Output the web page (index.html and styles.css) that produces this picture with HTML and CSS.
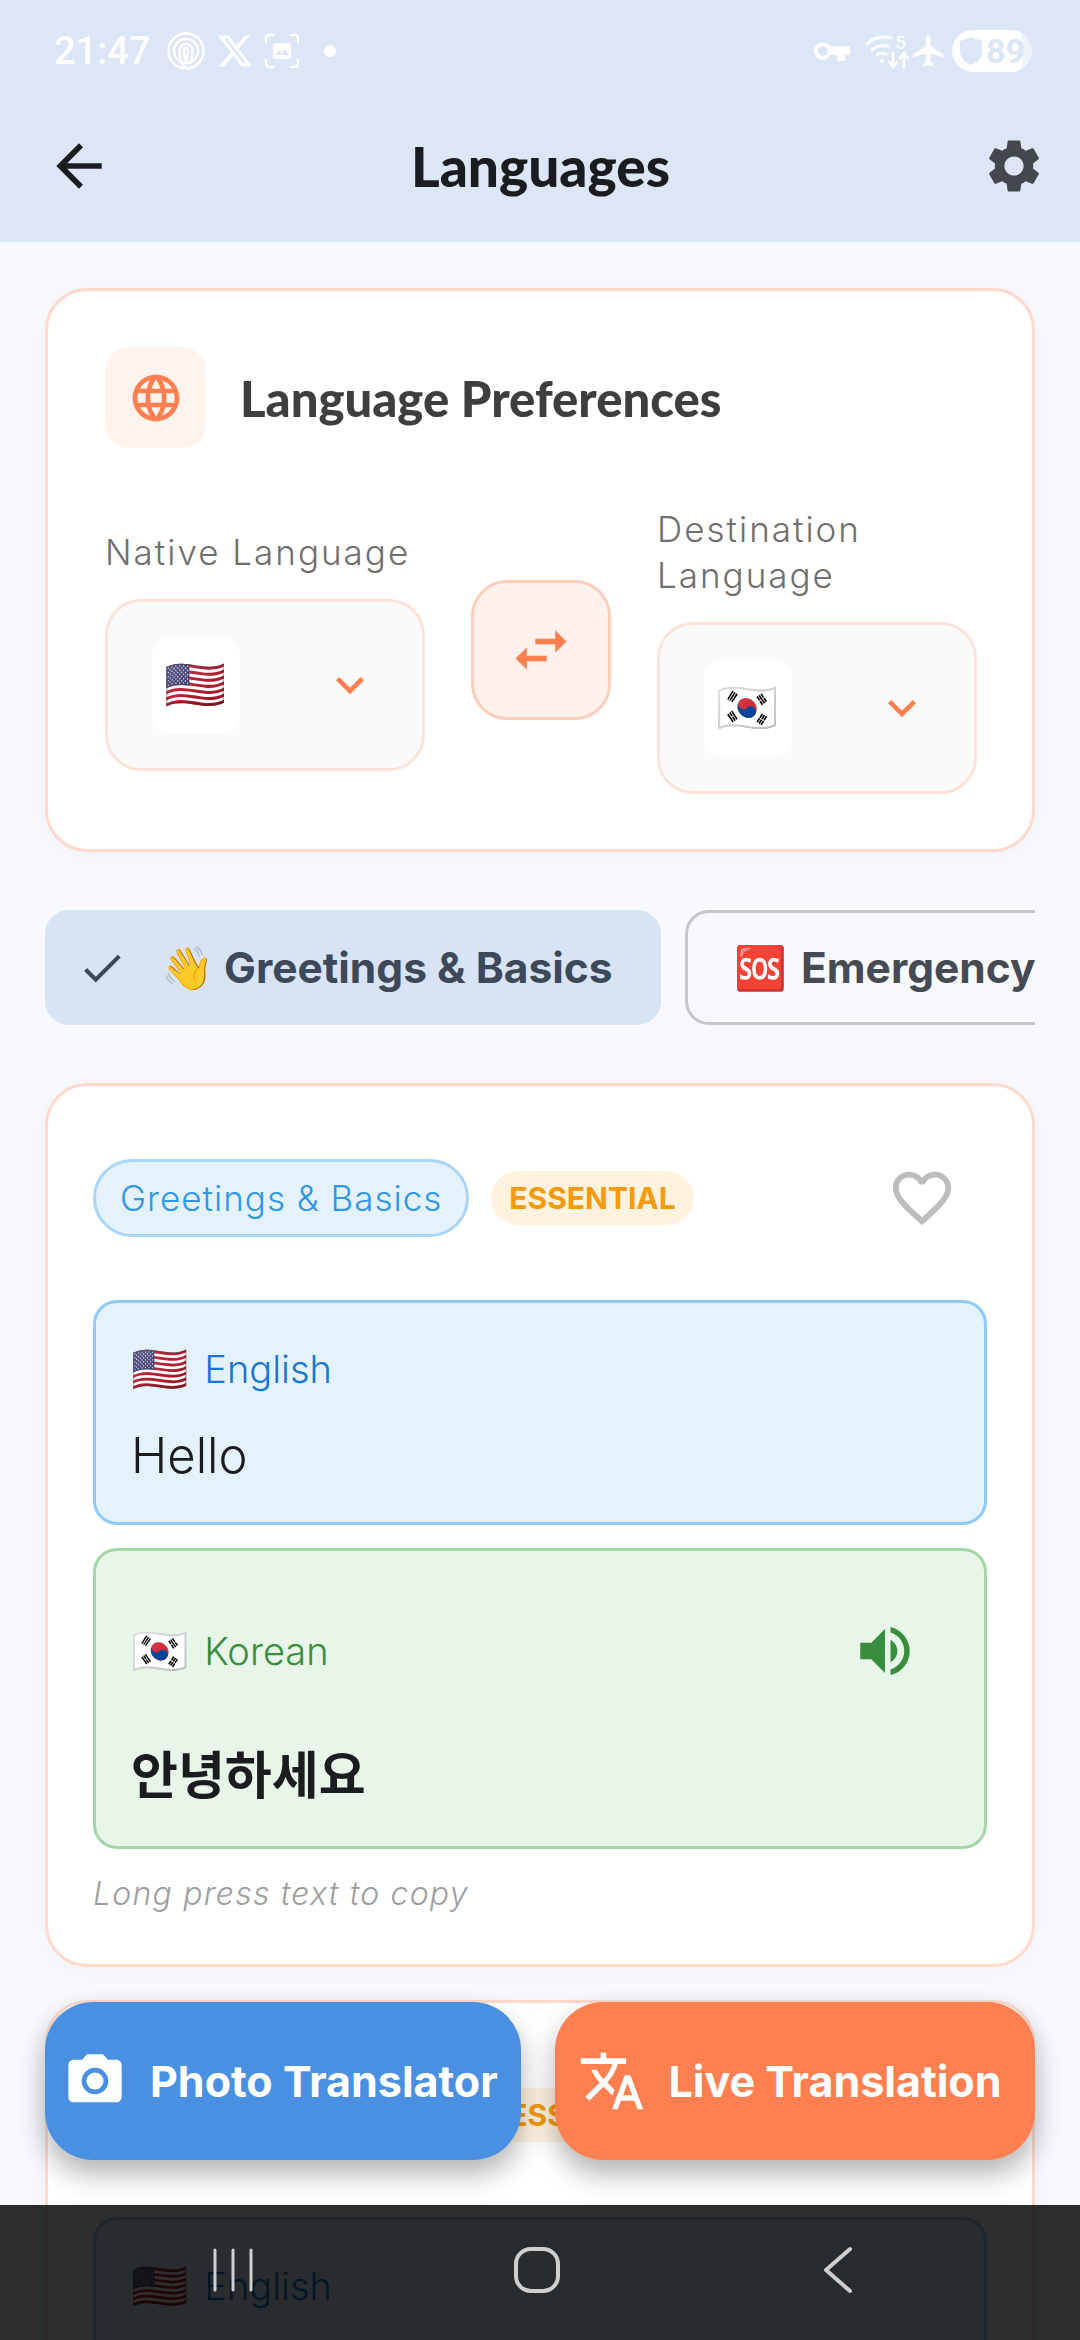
FILE: index.html
```html
<!DOCTYPE html>
<html lang="en">

<head>
    <meta charset="UTF-8">
    <meta name="viewport" content="width=device-width, initial-scale=1">
    <title>Languages</title>
    <link rel="stylesheet" href="styles.css">
</head>

<body>
    <div class="app">
        <div class="topbar">
            <div class="status">
                <div class="status-left">
                    <span class="time">21:47</span>
                    <svg class="st-icon" width="40" height="40" viewBox="0 0 40 40" fill="none" stroke="#fff" stroke-width="2.4"><circle cx="20" cy="20" r="17.5"/><circle cx="20" cy="20" r="12"/><path d="M20 37c-5-4-6.500-10-6.500-17 0-4 2.500-7 6.500-7s6.500 3 6.500 7c0 5-1 9-3 12"/><path d="M20 30c-1.500-3-2-6-2-10 0-2 1-3 2-3s2 1 2 3c0 4-.5 7-2 10z"/></svg>
                    <svg class="st-icon" width="38" height="38" viewBox="0 0 24 24" fill="#fff"><path d="M18.240 2.250h3.310l-7.230 8.260 8.500 11.240H16.170l-5.210-6.820L4.990 21.750H1.680l7.730-8.830L1.250 2.250H8.080l4.710 6.230zm-1.160 17.520h1.830L7.080 4.130H5.120z"/></svg>
                    <svg class="st-icon" width="36" height="36" viewBox="0 0 36 36" fill="none" stroke="#fff" stroke-width="2.600" stroke-linecap="round"><path d="M2 9V5a3 3 0 0 1 3-3h4M27 2h4a3 3 0 0 1 3 3v4M34 27v4a3 3 0 0 1-3 3h-4M9 34H5a3 3 0 0 1-3-3v-4"/><rect x="9" y="10" width="18" height="16" rx="3" fill="#fff" stroke="none"/><path d="M11 22l4-5 3 3 3-4 4 6z" fill="#dce6f7" stroke="none"/></svg>
                    <span class="dot"></span>
                </div>
                <div class="status-right">
                    <svg class="st-key" width="37" height="22" viewBox="0 0 38 22" fill="none"><circle cx="10" cy="11" r="7" stroke="#fff" stroke-width="4"/><path d="M16 6h22v9h-5v6h-8v-6H16z" fill="#fff"/></svg>
                    <svg class="st-wifi" width="44" height="36" viewBox="0 0 44 36" fill="none" stroke="#fff" stroke-width="2.800" stroke-linecap="round"><path d="M1 11c7-7 16-8 24-6M6 17c5-5 11-5 16-4M11 22c3-2 6-2 9-1"/><circle cx="16" cy="28" r="2" fill="#fff" stroke="none"/><path d="M27 20v13m-4-4l4 5 4-5M38 34V21m-4 4l4-5 4 5"/><text x="29" y="16" class="wifi-num">5</text></svg>
                    <svg width="38" height="38" viewBox="0 0 24 24" fill="#fff"><path d="M21 16v-2l-8-5V3.500c0-.83-.67-1.500-1.500-1.500S10 2.670 10 3.500V9l-8 5v2l8-2.500V19l-2 1.500V22l3.500-1 3.500 1v-1.500L13 19v-5.500z"/></svg>
                    <span class="battery"><svg width="24" height="30" viewBox="0 0 24 30" fill="#dce6f7"><path d="M12 1l11 4v10c0 7-5 12-11 14C6 27 1 22 1 15V5z"/></svg><span class="battery-num">89</span></span>
                </div>
            </div>
            <header class="appbar">
                <svg width="68" height="68" viewBox="0 0 24 24" fill="#1a1c20"><path d="M20 11H7.830l5.590-5.590L12 4l-8 8 8 8 1.410-1.410L7.830 13H20v-2z"/></svg>
                <h1>Languages</h1>
                <svg width="64" height="64" viewBox="0 0 24 24" fill="#43474e"><path d="M19.140 12.940c.04-.3.06-.61.06-.94 0-.32-.02-.64-.07-.94l2.030-1.580c.18-.14.23-.41.12-.61l-1.920-3.320c-.12-.22-.37-.29-.59-.22l-2.390.96c-.5-.38-1.030-.7-1.620-.94l-.36-2.540c-.04-.24-.24-.41-.48-.41h-3.840c-.24 0-.43.17-.47.41l-.36 2.540c-.59.24-1.130.57-1.620.94l-2.390-.96c-.22-.08-.47 0-.59.22L2.740 8.870c-.12.21-.08.47.12.61l2.030 1.580c-.05.3-.09.63-.09.94s.02.64.07.94l-2.030 1.580c-.18.14-.23.41-.12.61l1.920 3.320c.12.22.37.29.59.22l2.390-.96c.5.38 1.030.7 1.620.94l.36 2.540c.05.24.24.41.48.41h3.840c.24 0 .44-.17.47-.41l.36-2.540c.59-.24 1.130-.56 1.620-.94l2.390.96c.22.08.47 0 .59-.22l1.920-3.320c.12-.22.07-.47-.12-.61l-2.010-1.580zM12 15.600c-1.980 0-3.600-1.620-3.600-3.600s1.620-3.600 3.600-3.600 3.600 1.620 3.600 3.600-1.620 3.600-3.600 3.600z"/></svg>
            </header>
        </div>

        <main class="content">
            <section class="card prefs">
                <div class="prefs-head">
                    <div class="prefs-icon">
                        <svg width="56" height="56" viewBox="0 0 24 24" fill="#ff7f50"><path d="M11.990 2C6.470 2 2 6.480 2 12s4.470 10 9.990 10C17.520 22 22 17.520 22 12S17.520 2 11.990 2zm6.930 6h-2.950c-.32-1.250-.78-2.450-1.380-3.560 1.840.63 3.370 1.910 4.330 3.560zM12 4.040c.83 1.200 1.480 2.530 1.910 3.960h-3.820c.43-1.430 1.080-2.760 1.910-3.960zM4.260 14C4.100 13.360 4 12.690 4 12s.1-1.360.26-2h3.380c-.08.66-.14 1.320-.14 2 0 .68.06 1.340.14 2H4.260zm.82 2h2.950c.32 1.250.78 2.450 1.380 3.560-1.840-.63-3.370-1.900-4.330-3.560zm2.950-8H5.080c.96-1.660 2.490-2.930 4.330-3.560C8.810 5.550 8.350 6.750 8.030 8zM12 19.960c-.83-1.200-1.480-2.530-1.910-3.960h3.820c-.43 1.430-1.080 2.760-1.910 3.960zM14.340 14H9.660c-.09-.66-.16-1.320-.16-2 0-.68.07-1.350.16-2h4.680c.09.65.16 1.320.16 2 0 .68-.07 1.340-.16 2zm.25 5.560c.6-1.110 1.060-2.310 1.380-3.560h2.950c-.96 1.650-2.490 2.930-4.330 3.560zM16.360 14c.08-.66.14-1.320.14-2 0-.68-.06-1.340-.14-2h3.380c.16.64.26 1.310.26 2s-.1 1.360-.26 2h-3.380z"/></svg>
                    </div>
                    <h2>Language Preferences</h2>
                </div>
                <div class="lang-row">
                    <div class="lang-col">
                        <label class="lang-label">Native Language</label>
                        <div class="select">
                            <span class="flag-tile emoji">🇺🇸</span>
                            <svg width="56" height="56" viewBox="0 0 24 24" fill="#ff7f50"><path d="M7.410 8.590L12 13.170l4.590-4.580L18 10l-6 6-6-6 1.410-1.410z"/></svg>
                        </div>
                    </div>
                    <div class="swap">
                        <svg width="68" height="68" viewBox="0 0 24 24" fill="#ff7f50"><path d="M6.990 11L3 15l3.990 4v-3H14v-2H6.990v-3zM21 9l-3.990-4v3H10v2h7.010v3L21 9z"/></svg>
                    </div>
                    <div class="lang-col">
                        <label class="lang-label">Destination Language</label>
                        <div class="select">
                            <span class="flag-tile emoji">🇰🇷</span>
                            <svg width="56" height="56" viewBox="0 0 24 24" fill="#ff7f50"><path d="M7.410 8.590L12 13.170l4.590-4.580L18 10l-6 6-6-6 1.410-1.410z"/></svg>
                        </div>
                    </div>
                </div>
            </section>

            <div class="chips">
                <div class="chip chip-on">
                    <svg width="50" height="50" viewBox="0 0 24 24" fill="#3d4858"><path d="M9 16.170L4.830 12l-1.420 1.410L9 19 21 7l-1.410-1.410z"/></svg>
                    <span class="chip-text"><span class="emoji">👋</span> Greetings &amp; Basics</span>
                </div>
                <div class="chip chip-off">
                    <span class="chip-text"><span class="emoji">🆘</span> Emergency</span>
                </div>
            </div>

            <section class="card phrase">
                <div class="phrase-head">
                    <span class="tag">Greetings &amp; Basics</span>
                    <span class="badge">ESSENTIAL</span>
                    <svg class="heart" width="70" height="70" viewBox="0 0 24 24" fill="#bdbdbd"><path d="M16.500 3c-1.740 0-3.410.81-4.500 2.090C10.910 3.810 9.240 3 7.500 3 4.420 3 2 5.420 2 8.500c0 3.780 3.400 6.860 8.550 11.540L12 21.350l1.450-1.320C18.600 15.360 22 12.280 22 8.500 22 5.420 19.580 3 16.500 3zm-4.400 15.550l-.1.1-.1-.1C7.140 14.240 4 11.390 4 8.500 4 6.500 5.500 5 7.500 5c1.540 0 3.040.99 3.570 2.360h1.870C13.460 5.990 14.960 5 16.500 5c2 0 3.500 1.500 3.500 3.500 0 2.890-3.140 5.740-7.900 10.050z"/></svg>
                </div>
                <div class="box box-src">
                    <div class="box-head"><span class="emoji box-flag">🇺🇸</span><span class="box-lang">English</span></div>
                    <p class="src-text">Hello</p>
                </div>
                <div class="box box-dst">
                    <div class="box-head">
                        <span class="emoji box-flag">🇰🇷</span><span class="box-lang">Korean</span>
                        <svg class="speaker" width="66" height="66" viewBox="0 0 24 24" fill="#388e3c"><path d="M3 9v6h4l5 5V4L7 9H3zm13.500 3c0-1.770-1.020-3.290-2.500-4.030v8.050c1.480-.73 2.500-2.250 2.500-4.020zM14 3.230v2.060c2.890.86 5 3.540 5 6.710s-2.110 5.850-5 6.710v2.060c4.010-.91 7-4.490 7-8.770s-2.990-7.860-7-8.770z"/></svg>
                    </div>
                    <p class="dst-text" lang="ko">안녕하세요</p>
                </div>
                <p class="hint">Long press text to copy</p>
            </section>

            <section class="card phrase">
                <div class="phrase-head">
                    <span class="tag">Greetings &amp; Basics</span>
                    <span class="badge">ESSENTIAL</span>
                </div>
                <div class="box box-src">
                    <div class="box-head"><span class="emoji box-flag">🇺🇸</span><span class="box-lang">English</span></div>
                </div>
            </section>
        </main>

        <div class="fabs">
            <div class="fab fab-photo">
                <svg width="64" height="64" viewBox="0 0 24 24" fill="#fff"><circle cx="12" cy="12" r="3.200"/><path d="M9 2L7.170 4H4c-1.100 0-2 .9-2 2v12c0 1.100.9 2 2 2h16c1.100 0 2-.9 2-2V6c0-1.100-.9-2-2-2h-3.170L15 2H9zm3 15c-2.760 0-5-2.240-5-5s2.240-5 5-5 5 2.240 5 5-2.240 5-5 5z"/></svg>
                <span>Photo Translator</span>
            </div>
            <div class="fab fab-live">
                <svg width="68" height="68" viewBox="0 0 24 24" fill="#fff"><path d="M12.870 15.070l-2.540-2.510.03-.03c1.740-1.940 2.980-4.170 3.710-6.530H17V4h-7V2H8v2H1v1.990h11.170C11.500 7.920 10.440 9.750 9 11.350 8.070 10.320 7.300 9.190 6.690 8h-2c.73 1.630 1.730 3.170 2.980 4.560l-5.090 5.020L4 19l5-5 3.110 3.110.76-2.040zM18.500 10h-2L12 22h2l1.120-3h4.750L21 22h2l-4.500-12zm-2.620 7l1.620-4.330L19.120 17h-3.240z"/></svg>
                <span>Live Translation</span>
            </div>
        </div>

        <nav class="navbar">
            <svg width="44" height="46" viewBox="0 0 44 46" fill="none" stroke="#cfcfcf" stroke-width="3" stroke-linecap="round"><path d="M4 3v40M22 3v40M40 3v40"/></svg>
            <svg class="nav-home" width="46" height="46" viewBox="0 0 46 46" fill="none" stroke="#cfcfcf" stroke-width="4"><rect x="2" y="2" width="42" height="42" rx="15"/></svg>
            <svg width="34" height="48" viewBox="0 0 34 48" fill="none" stroke="#cfcfcf" stroke-width="4" stroke-linecap="round" stroke-linejoin="round"><path d="M29 3L5 24l24 21"/></svg>
        </nav>
    </div>
</body>

</html>
```

FILE: styles.css
```css
html,
body {
    margin: 0;
    padding: 0;
    background: #f8f9fe;
}

.app {
    width: 1080px;
    height: 2340px;
    position: relative;
    overflow: hidden;
    background: #f8f9fe;
    font-family: "Inter", "Noto Sans CJK KR", sans-serif;
    color: #1a1c20;
}

.emoji {
    font-family: "Noto Color Emoji", sans-serif;
}

/* top */
.topbar {
    height: 242px;
    background: #dce6f7;
}

.status {
    height: 102px;
    display: flex;
    align-items: center;
    justify-content: space-between;
    padding: 0 48px 0 54px;
}

.status-left,
.status-right {
    display: flex;
    align-items: center;
}

.status-left {
    gap: 10px;
}

.status-right {
    gap: 4px;
}

.st-key {
    margin-right: 12px;
}

.st-wifi {
    margin-right: -4px;
    overflow: visible;
}

.time {
    font-family: "Roboto", sans-serif;
    font-size: 38px;
    font-weight: 500;
    color: #fff;
    opacity: 0.95;
    margin-right: 6px;
}

.dot {
    width: 12px;
    height: 12px;
    border-radius: 50%;
    background: #fff;
    margin-left: 14px;
}

.wifi-num {
    font-family: "Roboto", sans-serif;
    font-size: 19px;
    fill: #fff;
    stroke: none;
}

.battery {
    width: 80px;
    height: 42px;
    border-radius: 21px;
    background: linear-gradient(90deg, #fff 88%, #eef3fc 88%);
    display: flex;
    align-items: center;
    justify-content: center;
    gap: 3px;
}

.battery-num {
    font-family: "Roboto", sans-serif;
    font-size: 34px;
    font-weight: 700;
    color: #dce6f7;
}

.appbar {
    height: 140px;
    box-sizing: border-box;
    display: flex;
    align-items: center;
    justify-content: space-between;
    padding: 0 34px 12px 45px;
}

h1 {
    margin: 0 14px 0 0;
    font-family: "Lato", sans-serif;
    font-size: 55px;
    font-weight: 900;
    color: #1a1c20;
}

/* cards */
.content {
    padding: 46px 45px 0;
    display: flex;
    flex-direction: column;
    gap: 36px;
}

.card {
    background: #fff;
    border: 3px solid #ffd9cc;
    border-radius: 42px;
    box-sizing: border-box;
    box-shadow: 0 4px 24px rgba(0, 0, 0, 0.03);
}

.prefs {
    height: 564px;
    padding: 56px 57px 0;
    margin-bottom: 22px;
}

.prefs-head {
    display: flex;
    align-items: center;
    gap: 34px;
}

.prefs-icon {
    width: 101px;
    height: 101px;
    border-radius: 24px;
    background: #fff3ee;
    display: flex;
    align-items: center;
    justify-content: center;
}

h2 {
    margin: 0;
    font-family: "Lato", sans-serif;
    font-size: 49px;
    font-weight: 900;
    color: #3e3e3e;
}

.lang-row {
    display: flex;
    align-items: center;
    gap: 46px;
    margin-top: 58px;
}

.lang-col {
    width: 320px;
    flex: none;
}

.lang-label {
    display: block;
    font-size: 35px;
    font-weight: 300;
    line-height: 46px;
    letter-spacing: 2px;
    color: #6f6f6f;
    margin-bottom: 24px;
}

.select {
    height: 172px;
    box-sizing: border-box;
    border: 3px solid #fbe3da;
    border-radius: 36px;
    background: #fafafa;
    display: flex;
    align-items: center;
    justify-content: space-between;
    padding: 0 44px;
}

.flag-tile {
    width: 88px;
    height: 97px;
    border-radius: 18px;
    background: #fff;
    display: flex;
    align-items: center;
    justify-content: center;
    font-size: 50px;
}

.swap {
    width: 140px;
    height: 140px;
    flex: none;
    box-sizing: border-box;
    border: 3px solid #fbcfbc;
    border-radius: 36px;
    background: #fff1ec;
    display: flex;
    align-items: center;
    justify-content: center;
}

/* chips */
.chips {
    display: flex;
    gap: 24px;
    height: 115px;
    overflow: hidden;
    margin-bottom: 22px;
}

.chip {
    height: 115px;
    box-sizing: border-box;
    border-radius: 24px;
    display: flex;
    align-items: center;
    flex: none;
    font-size: 42.5px;
    font-weight: 700;
    color: #464b53;
    white-space: nowrap;
}

.chip-on {
    width: 616px;
    padding-left: 32px;
    gap: 34px;
    background: #d8e3f6;
    color: #3d4858;
}

.chip-off {
    padding-left: 46px;
    width: 420px;
    border: 3px solid #c4c6cc;
}

.chip-off .emoji {
    margin-right: 4px;
}

/* phrase card */
.phrase {
    flex: none;
    height: 884px;
    padding: 73px 45px 0;
    margin-bottom: -3px;
}

.phrase-head {
    display: flex;
    align-items: center;
    gap: 22px;
    height: 78px;
}

.tag {
    height: 78px;
    box-sizing: border-box;
    border: 3px solid #a9d5f8;
    border-radius: 39px;
    background: #e3f2fd;
    color: #2f96e8;
    font-size: 35px;
    font-weight: 300;
    letter-spacing: 1px;
    display: flex;
    align-items: center;
    padding: 0 24px;
}

.badge {
    height: 54px;
    border-radius: 27px;
    background: #fff3e0;
    color: #f59a0c;
    font-size: 30px;
    font-weight: 700;
    display: flex;
    align-items: center;
    padding: 0 18px;
}

.heart {
    margin-left: auto;
    margin-right: 30px;
}

.box {
    box-sizing: border-box;
    border-radius: 24px;
    border: 3px solid;
    padding: 0 35px;
}

.box-src {
    height: 225px;
    margin-top: 63px;
    background: #e3f2fd;
    border-color: #90caf9;
}

.box-dst {
    height: 301px;
    margin-top: 23px;
    background: #e8f5e9;
    border-color: #a5d6a7;
}

.box-head {
    display: flex;
    align-items: center;
    gap: 16px;
}

.box-src .box-head {
    height: 132px;
}

.box-dst .box-head {
    height: 200px;
}

.box-flag {
    font-size: 46px;
}

.box-lang {
    font-size: 38px;
    font-weight: 300;
}

.box-src .box-lang {
    color: #1976d2;
}

.box-dst .box-lang {
    color: #388e3c;
}

.speaker {
    margin-left: auto;
    margin-right: 31px;
}

.src-text {
    margin: -7px 0 0;
    font-size: 49px;
    font-weight: 300;
    line-height: 56px;
    color: #1a1c20;
}

.dst-text {
    margin: -5px 0 0;
    font-size: 51px;
    font-weight: 700;
    line-height: 60px;
    color: #1a1c20;
}

.hint {
    margin: 25px 0 0;
    font-size: 32px;
    font-weight: 300;
    font-style: italic;
    letter-spacing: 1.2px;
    color: #9e9e9e;
}

/* floating buttons */
.fabs {
    position: absolute;
    left: 45px;
    right: 45px;
    top: 2002px;
    display: flex;
    gap: 34px;
}

.fab {
    flex: 1 1 0;
    box-sizing: border-box;
    height: 158px;
    border-radius: 48px;
    display: flex;
    align-items: center;
    gap: 23px;
    color: #fff;
    font-size: 43px;
    font-weight: 700;
    box-shadow: 0 14px 28px rgba(0, 0, 0, 0.3);
    white-space: nowrap;
}

.fab-photo {
    background: #4a90e2;
    padding-left: 18px;
}

.fab-live {
    background: #ff7f50;
    padding-left: 23px;
}

/* system nav */
.navbar {
    position: absolute;
    left: 0;
    right: 0;
    bottom: 0;
    height: 135px;
    background: rgba(0, 0, 0, 0.82);
    display: flex;
    align-items: center;
    justify-content: space-between;
    padding: 0 225px 6px 211px;
    box-sizing: border-box;
}

.nav-home {
    margin-right: 2px;
}
```
